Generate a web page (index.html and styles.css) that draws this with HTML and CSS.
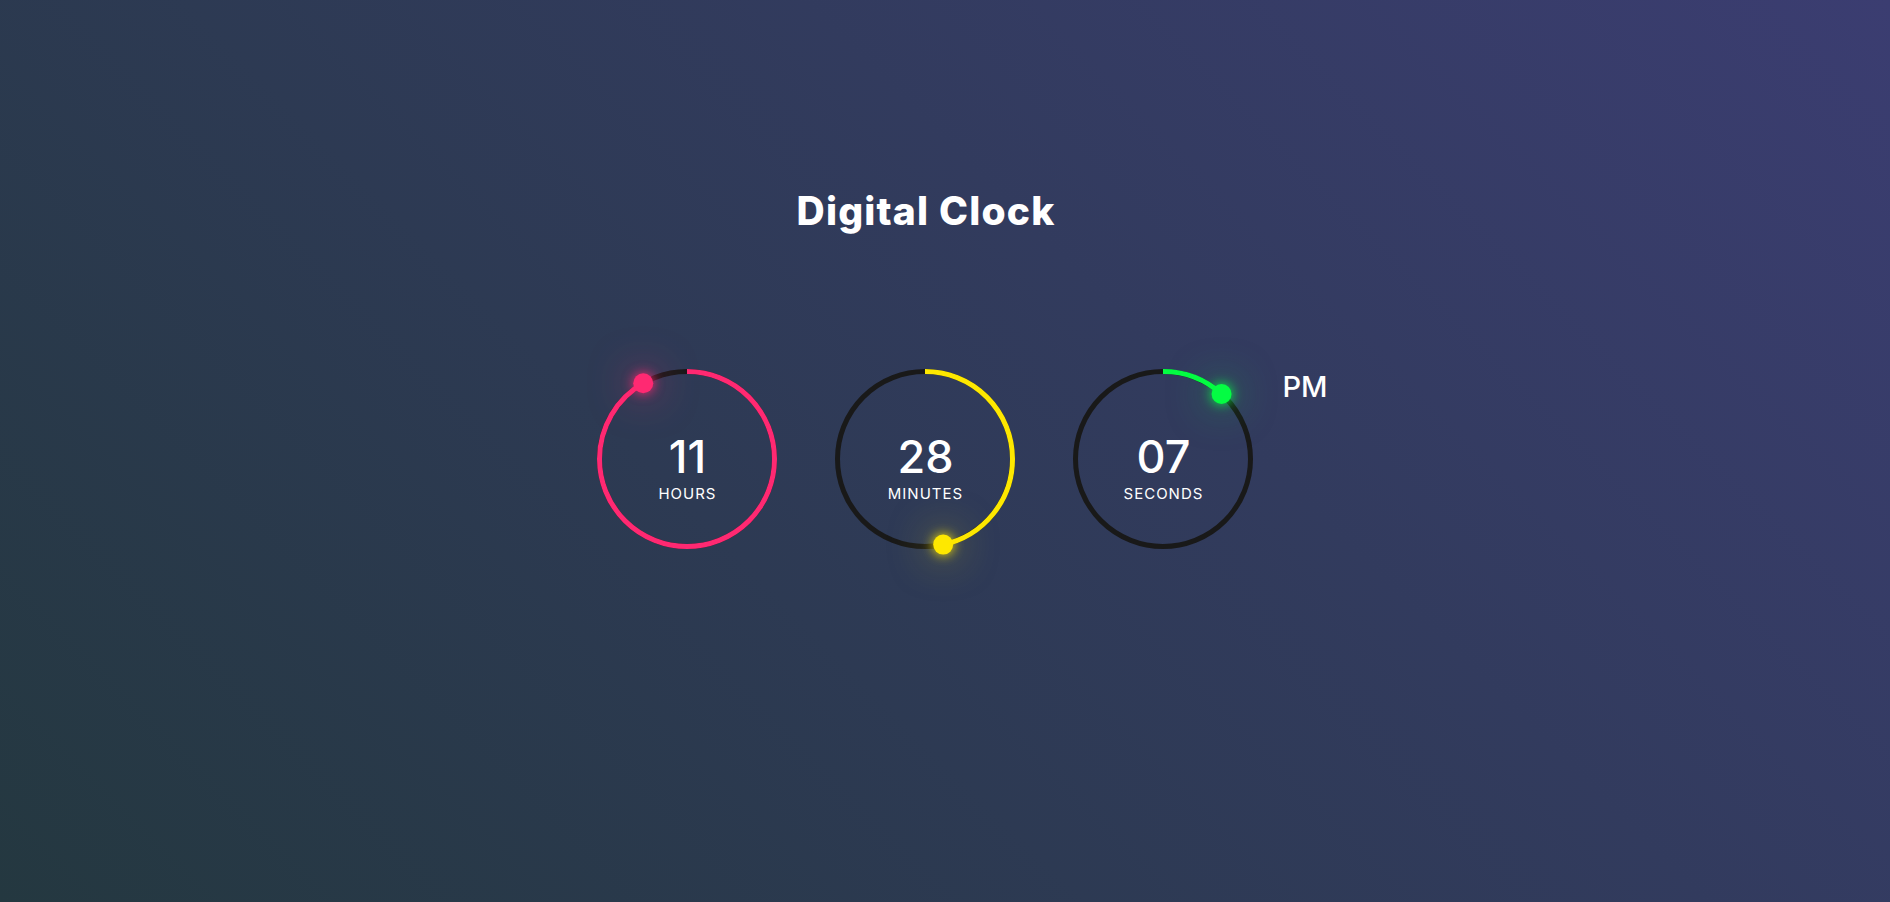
FILE: index.html
```html
<!DOCTYPE html>
<html lang="en">
<head>
<meta charset="utf-8">
<title>Digital Clock</title>
<link rel="stylesheet" href="styles.css">
</head>
<body>
<main class="page">
  <h1 class="title">Digital Clock</h1>
  <div class="clock">
    <div class="unit">
      <svg class="ring" width="180" height="180" viewBox="0 0 180 180">
        <circle class="track" cx="90" cy="90" r="87.5"/>
        <circle class="arc arc-hours" cx="90" cy="90" r="87.5" stroke-dasharray="549.78" stroke-dashoffset="45.82"/>
        <circle class="dot dot-hours" cx="46.25" cy="14.22" r="10"/>
      </svg>
      <div class="readout">
        <span class="value">11</span>
        <span class="label">Hours</span>
      </div>
    </div>
    <div class="unit">
      <svg class="ring" width="180" height="180" viewBox="0 0 180 180">
        <circle class="track" cx="90" cy="90" r="87.5"/>
        <circle class="arc arc-minutes" cx="90" cy="90" r="87.5" stroke-dasharray="549.78" stroke-dashoffset="293.22"/>
        <circle class="dot dot-minutes" cx="108.19" cy="175.59" r="10"/>
      </svg>
      <div class="readout">
        <span class="value">28</span>
        <span class="label">Minutes</span>
      </div>
    </div>
    <div class="unit">
      <svg class="ring" width="180" height="180" viewBox="0 0 180 180">
        <circle class="track" cx="90" cy="90" r="87.5"/>
        <circle class="arc arc-seconds" cx="90" cy="90" r="87.5" stroke-dasharray="549.78" stroke-dashoffset="485.64"/>
        <circle class="dot dot-seconds" cx="148.55" cy="24.98" r="10"/>
      </svg>
      <div class="readout">
        <span class="value">07</span>
        <span class="label">Seconds</span>
      </div>
    </div>
    <div class="ampm">PM</div>
  </div>
</main>
</body>
</html>
```
FILE: styles.css
```css
* { box-sizing: border-box; }

html, body {
  margin: 0;
  height: 100%;
}

body {
  background: linear-gradient(45deg, #243840 0%, #3b3d71 100%);
  font-family: Inter, "Noto Sans", "Liberation Sans", sans-serif;
  color: #fff;
  overflow: hidden;
}

.page {
  display: flex;
  flex-direction: column;
  align-items: center;
  padding: 187px 38px 0 0;
}

.title {
  margin: 0;
  font-size: 39px;
  line-height: 48px;
  font-weight: 800;
  letter-spacing: 1.2px;
  color: #fff;
}

.clock {
  display: flex;
  align-items: flex-start;
  gap: 58px;
  margin-top: 134px;
}

.unit {
  display: grid;
  width: 180px;
  height: 180px;
}

.ring,
.readout {
  grid-area: 1 / 1;
}

.ring {
  overflow: visible;
}

.track {
  fill: none;
  stroke: #191919;
  stroke-width: 5;
}

.arc {
  fill: none;
  stroke-width: 5;
  transform: rotate(-90deg);
  transform-origin: 90px 90px;
}

.arc-hours { stroke: #ff2972; }
.arc-minutes { stroke: #fee800; }
.arc-seconds { stroke: #04fc43; }

.dot-hours {
  fill: #ff2972;
  filter: drop-shadow(0 0 6px #ff2972) drop-shadow(0 0 20px rgba(255, 41, 114, 0.6));
}
.dot-minutes {
  fill: #fee800;
  filter: drop-shadow(0 0 6px #fee800) drop-shadow(0 0 20px rgba(254, 232, 0, 0.5));
}
.dot-seconds {
  fill: #04fc43;
  filter: drop-shadow(0 0 6px #04fc43) drop-shadow(0 0 20px rgba(4, 252, 67, 0.5));
}

.readout {
  display: flex;
  flex-direction: column;
  align-items: center;
  align-self: center;
  justify-self: center;
  margin-top: 18px;
}

.value {
  font-size: 45px;
  line-height: 50px;
  font-weight: 500;
}

.label {
  margin-top: 2px;
  font-size: 15px;
  line-height: 20px;
  font-weight: 400;
  text-transform: uppercase;
  letter-spacing: 1px;
}

.ampm {
  margin-left: -29px;
  margin-right: -73px;
  font-size: 29px;
  line-height: 36px;
  font-weight: 500;
}
```
